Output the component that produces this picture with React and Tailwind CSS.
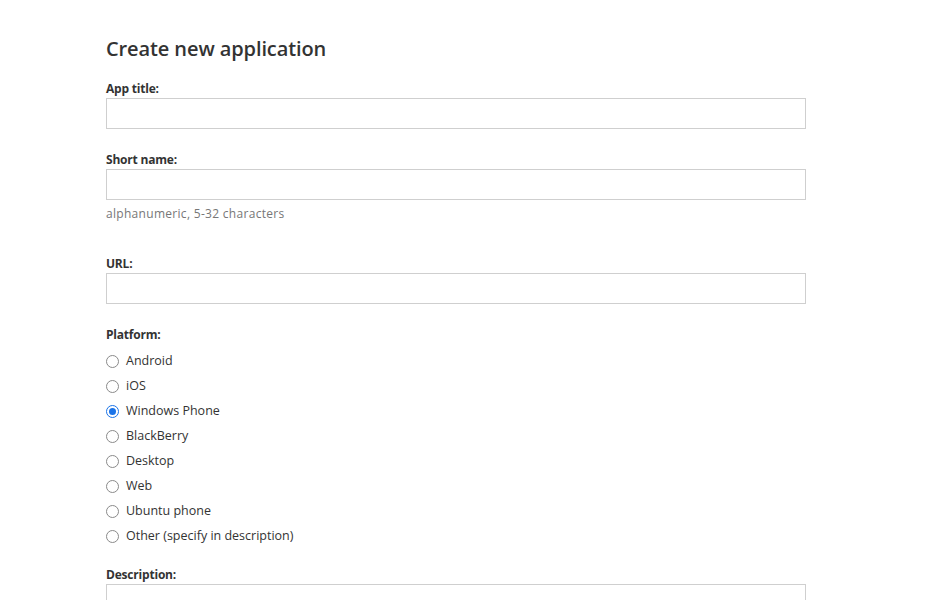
const platforms = [
  "Android",
  "iOS",
  "Windows Phone",
  "BlackBerry",
  "Desktop",
  "Web",
  "Ubuntu phone",
  "Other (specify in description)",
];

const Label = ({ children, className = "" }) => (
  <div className={`h-[17px] pt-[1px] leading-4 text-[12px] font-bold tracking-[-0.2px] text-[#333] ${className}`}>
    {children}
  </div>
);

const Field = () => (
  <div className="mt-[1px] h-[31px] w-[700px] border border-[#cfcfcf] bg-white" />
);

const Radio = ({ checked }) =>
  checked ? (
    <span className="w-[13px] h-[13px] rounded-full border border-[#1a73e8] bg-white flex items-center justify-center">
      <span className="w-[7px] h-[7px] rounded-full bg-[#1a73e8]" />
    </span>
  ) : (
    <span className="w-[13px] h-[13px] rounded-full border border-[#8a8a8a] bg-white" />
  );

export default function App() {
  return (
    <div
      className="min-h-screen bg-white text-[#333]"
      style={{ fontFamily: '"Open Sans", "DejaVu Sans", sans-serif' }}
    >
      <div className="pl-[106px] pt-[35px]">
        <h1 className="h-7 leading-7 text-[20px] font-semibold tracking-[-0.1px] text-[#333]">Create new application</h1>

        <Label className="mt-[17px]">App title:</Label>
        <Field />

        <Label className="mt-[22px]">Short name:</Label>
        <Field />
        <div className="mt-[6px] h-[15px] leading-[15px] text-[12px] text-[#777] tracking-[0.3px]">
          alphanumeric, 5-32 characters
        </div>

        <Label className="mt-[34px]">URL:</Label>
        <Field />

        <Label className="mt-[22px]">Platform:</Label>
        <div className="mt-[6px] flex flex-col">
          {platforms.map((p) => (
            <label key={p} className="h-[25px] flex items-center gap-[7px] text-[12.5px] text-[#333]">
              <Radio checked={p === "Windows Phone"} />
              <span>{p}</span>
            </label>
          ))}
        </div>

        <Label className="mt-[17px]">Description:</Label>
        <Field />
      </div>
    </div>
  );
}
